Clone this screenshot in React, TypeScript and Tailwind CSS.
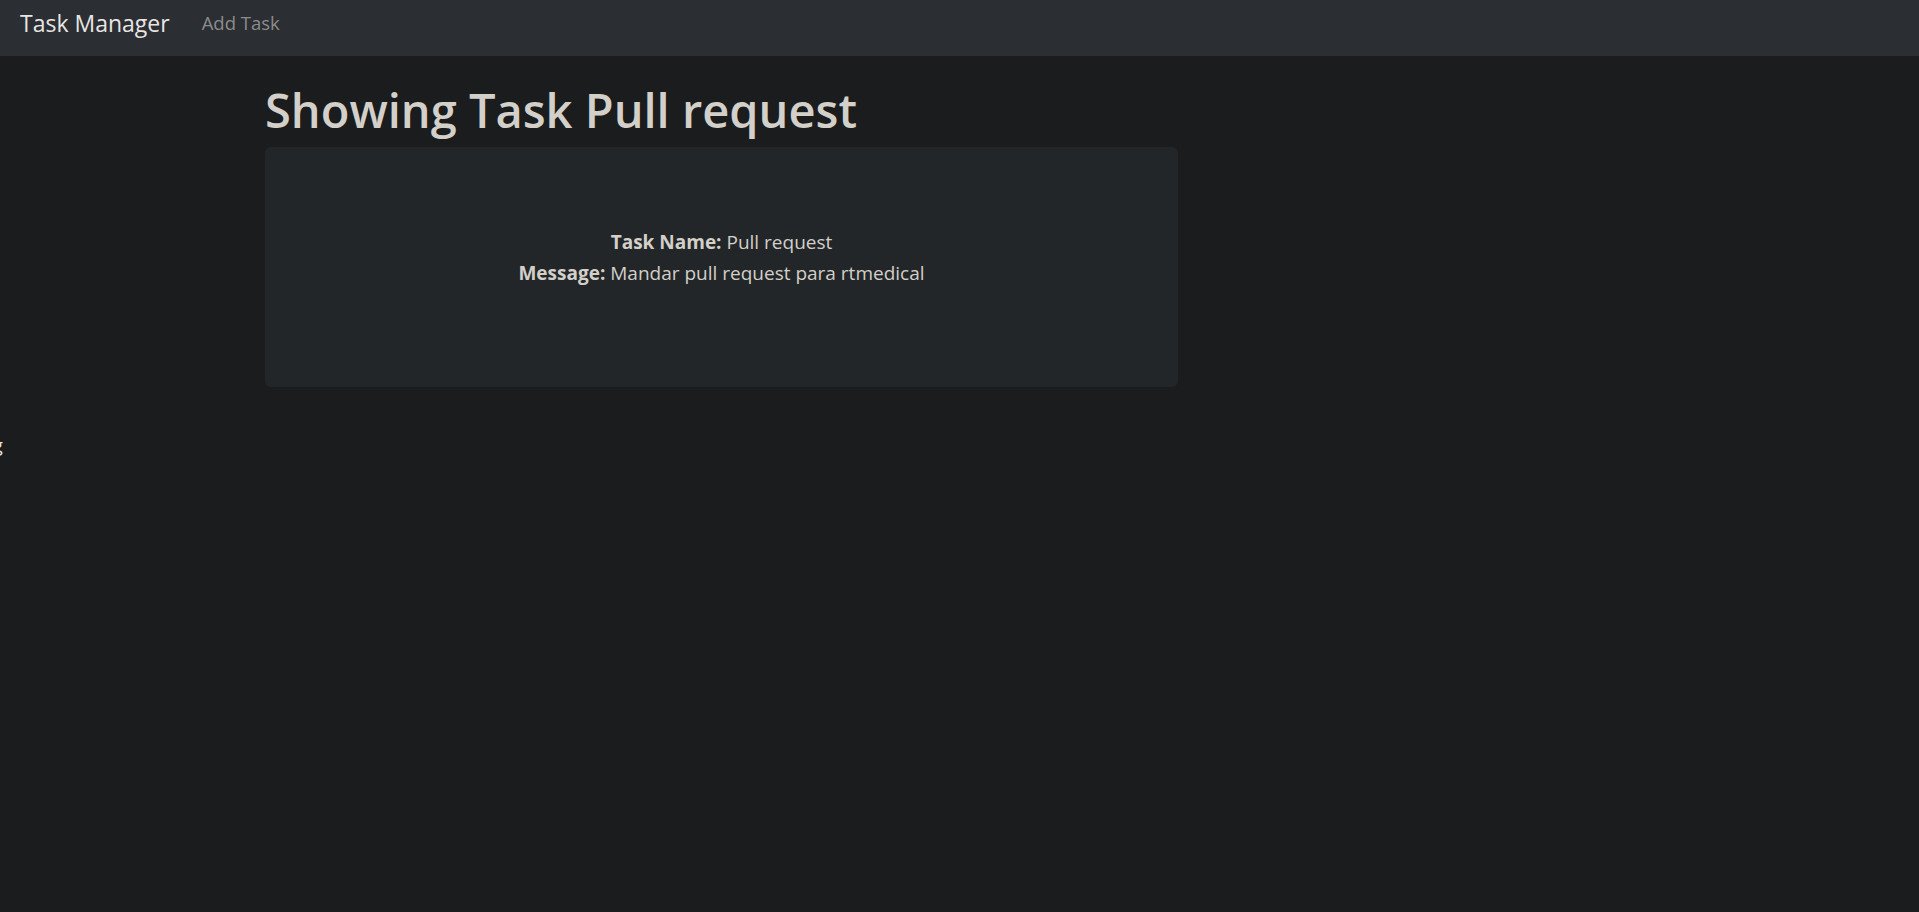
const task = { name: "Pull request", message: "Mandar pull request para rtmedical" };

export default function App() {
  return (
    <div
      className="relative min-h-[912px] bg-[#1b1c1e] text-[#d3cfc9]"
      style={{ fontFamily: '"Open Sans", "Noto Sans", sans-serif' }}
    >
      {/* Navbar */}
      <nav className="h-[56px] bg-[#2b2e32] flex items-start pt-[8px] px-[20px]">
        <a href="#" className="text-[23px] leading-[30px] text-[#e8e6e3] mr-[32px]">
          Task Manager
        </a>
        <a href="#" className="text-[18.5px] leading-[30px] text-[#8c8c8c]">
          Add Task
        </a>
      </nav>

      {/* stray glyph at the edge */}
      <span className="absolute left-[-7px] top-[432px] text-[18px] text-[#e8e6e3]">g</span>

      <main className="ml-[265px] w-[913px]">
        <h1 className="pt-[24px] text-[47px] leading-[60px] font-semibold mb-[7px]">
          Showing Task {task.name}
        </h1>
        <div className="bg-[#222628] rounded-[6px] h-[240px] pt-[80px] text-center text-[19px] leading-[31px]">
          <div>
            <strong className="font-bold">Task Name:</strong> {task.name}
          </div>
          <div>
            <strong className="font-bold">Message:</strong> {task.message}
          </div>
        </div>
      </main>
    </div>
  );
}
